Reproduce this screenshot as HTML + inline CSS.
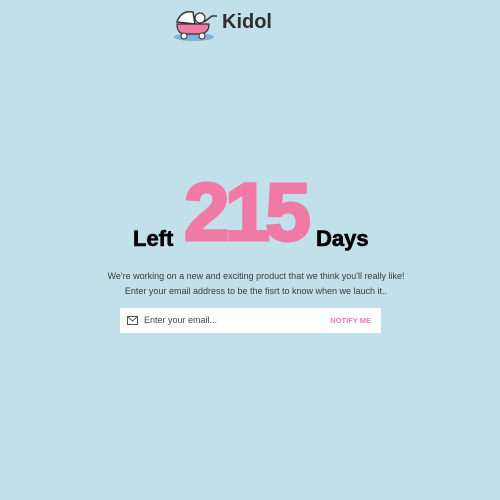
<!DOCTYPE html>
<html><head><style>
html,body{margin:0;padding:0;width:500px;height:500px;background:#c2e0ea;overflow:hidden;font-family:"Liberation Sans",sans-serif;}
.logo{position:absolute;left:222px;top:11px;font-size:20px;color:#2e2e2e;font-weight:bold;}
.big{position:absolute;left:184px;top:172px;font-size:82px;font-weight:bold;color:#f07aa6;letter-spacing:-5px;line-height:1;-webkit-text-stroke:3px #f07aa6}
.w{position:absolute;font-size:22px;font-weight:bold;color:#000;top:226px;-webkit-text-stroke:0.6px #000}
.p{position:absolute;left:6px;width:500px;text-align:center;font-size:9px;color:#3a3a3a}
.box{position:absolute;left:120px;top:308px;width:261px;height:25px;background:#fff}
</style></head><body>
<svg style="position:absolute;left:173px;top:8px" width="46" height="34" viewBox="0 0 46 34">
<ellipse cx="21" cy="29" rx="20" ry="4" fill="#7fb4d6"/>
<path d="M4 14 Q8 2 20 4 L22 16 Z" fill="#fff" stroke="#333" stroke-width="1.5"/>
<circle cx="27" cy="10" r="5" fill="#fff" stroke="#333" stroke-width="1.2"/>
<path d="M31 14 L39 8 L44 8" stroke="#333" stroke-width="1.5" fill="none"/>
<path d="M4 16 L36 16 Q36 26 26 26 L12 26 Q4 26 4 16 Z" fill="#f07aa6" stroke="#333" stroke-width="1.2"/>
<circle cx="11" cy="28" r="3" fill="#fff" stroke="#333"/>
<circle cx="29" cy="28" r="3" fill="#fff" stroke="#333"/>
</svg>
<div class="logo">Kidol</div>
<div class="w" style="left:133px">Left</div>
<div class="big">215</div>
<div class="w" style="left:316px">Days</div>
<div class="p" style="top:271px">We're working on a new and exciting product that we think you'll really like!</div>
<div class="p" style="top:286px">Enter your email address to be the fisrt to know when we lauch it..</div>
<div class="box">
<svg style="position:absolute;left:7px;top:8px" width="11" height="9" viewBox="0 0 11 9"><rect x="0.5" y="0.5" width="10" height="8" fill="none" stroke="#555"/><path d="M0.5 0.5 L5.5 5 L10.5 0.5" fill="none" stroke="#555"/></svg>
<div style="position:absolute;left:24px;top:7px;font-size:9px;color:#444">Enter your email...</div>
<div style="position:absolute;right:10px;top:8px;font-size:7.5px;font-weight:bold;color:#f07aa6">NOTIFY ME</div>
</div>
</body></html>
